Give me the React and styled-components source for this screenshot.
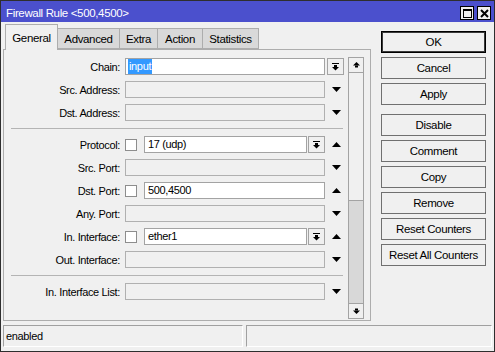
import React from "react";
import styled, { createGlobalStyle } from "styled-components";

const GlobalStyle = createGlobalStyle`
  html, body {
    margin: 0;
    padding: 0;
    background: #f0f0f0;
  }
  body {
    font-family: "Liberation Sans", Arial, sans-serif;
    font-size: 11px;
    letter-spacing: -0.35px;
    color: #000;
  }
  * {
    box-sizing: border-box;
  }
`;

function DropIcon() {
    return (
        <svg width="7" height="8" viewBox="0 0 7 8">
            <rect x="0" y="0" width="7" height="1" />
            <rect x="2" y="2" width="3" height="2" />
            <polygon points="0,4 7,4 3.5,7.5" />
        </svg>
    )
}

function ScrollIcon({ down }) {
    return (
        <svg width="7" height="6" viewBox="0 0 7 6" style={down ? { transform: "rotate(180deg)" } : undefined}>
            <polygon points="3.5,0 7,3.5 0,3.5" />
            <rect x="2" y="3.5" width="3" height="2" />
        </svg>
    )
}

function Triangle({ up }) {
    return (
        <svg width="9" height="5" viewBox="0 0 9 5">
            {up
                ? <polygon points="4.5,0 9,5 0,5" />
                : <polygon points="0,0 9,0 4.5,5" />}
        </svg>
    )
}

function Row({ label, check, value, enabled, drop, arrow }) {
    return (
        <FieldRow>
            <Label>{label}</Label>
            <Field>
                {check && <Check />}
                <TextBox $enabled={enabled}>{value}</TextBox>
                {drop && <DropButton><DropIcon /></DropButton>}
            </Field>
            <ArrowCell>
                <Triangle up={arrow === "up"} />
            </ArrowCell>
        </FieldRow>
    )
}

const tabs = [
    { name: "General", w: 53 },
    { name: "Advanced", w: 63 },
    { name: "Extra", w: 39 },
    { name: "Action", w: 46 },
    { name: "Statistics", w: 57 },
];

const buttons = [
    ["OK", "Cancel", "Apply"],
    ["Disable", "Comment", "Copy", "Remove", "Reset Counters", "Reset All Counters"],
];

function App() {
    return (
        <>
            <GlobalStyle />
            <Window>
                <TitleBar>
                    <Title>Firewall Rule &lt;500,4500&gt;</Title>
                    <TitleButtons>
                        <TitleButton>
                            <svg width="9" height="9" viewBox="0 0 9 9">
                                <rect x="0.5" y="0.5" width="8" height="8" fill="none" stroke="#000" />
                                <rect x="0" y="0" width="9" height="2" fill="#000" />
                            </svg>
                        </TitleButton>
                        <TitleButton>
                            <svg width="9" height="9" viewBox="0 0 9 9">
                                <path d="M1 1 L8 8 M8 1 L1 8" stroke="#000" strokeWidth="2" />
                            </svg>
                        </TitleButton>
                    </TitleButtons>
                </TitleBar>
                <Body>
                    <LeftColumn>
                        <TabRow>
                            {tabs.map((t, i) => (
                                <Tab key={t.name} $active={i === 0} $w={t.w}>{t.name}</Tab>
                            ))}
                        </TabRow>
                        <Panel>
                            <Form>
                                <FieldRow>
                                    <Label>Chain:</Label>
                                    <Field>
                                        <TextBox $enabled>
                                            <Selected>input</Selected>
                                        </TextBox>
                                    </Field>
                                    <ChainDrop><DropIcon /></ChainDrop>
                                </FieldRow>
                                <Row label="Src. Address:" />
                                <Row label="Dst. Address:" />
                                <Separator />
                                <Row label="Protocol:" check enabled drop value="17 (udp)" arrow="up" />
                                <Row label="Src. Port:" />
                                <Row label="Dst. Port:" check enabled value="500,4500" arrow="up" />
                                <Row label="Any. Port:" />
                                <Row label="In. Interface:" check enabled drop value="ether1" arrow="up" />
                                <Row label="Out. Interface:" />
                                <Separator />
                                <Row label="In. Interface List:" />
                            </Form>
                            <ScrollBar>
                                <ScrollButton><ScrollIcon /></ScrollButton>
                                <Thumb />
                                <Track />
                                <ScrollButton $bottom><ScrollIcon down /></ScrollButton>
                            </ScrollBar>
                        </Panel>
                    </LeftColumn>
                    <ButtonColumn>
                        {buttons.map((group, gi) => (
                            <ButtonGroup key={gi}>
                                {group.map((b) => (
                                    <Button key={b} $default={b === "OK"}>{b}</Button>
                                ))}
                            </ButtonGroup>
                        ))}
                    </ButtonColumn>
                </Body>
                <StatusBar>
                    <StatusCell $w={240}>enabled</StatusCell>
                    <StatusCell $w={246} />
                </StatusBar>
            </Window>
        </>
    )
}

const Window = styled.div`
    width: 495px;
    height: 352px;
    border: 1px solid #2e2e2e;
    background: #f0f0f0;
    display: flex;
    flex-direction: column;
`

const TitleBar = styled.div`
    height: 21px;
    flex-shrink: 0;
    background: #4b50cd;
    color: #fff;
    display: flex;
    align-items: center;
    justify-content: space-between;
    padding: 3px 3px 0 5px;
`

const Title = styled.div`
    font-size: 11.5px;
    white-space: nowrap;
`

const TitleButtons = styled.div`
    display: flex;
    gap: 3px;
`

const TitleButton = styled.div`
    width: 14px;
    height: 14px;
    border: 1px solid #000;
    background: #f0f0f0;
    display: flex;
    align-items: center;
    justify-content: center;
`

const Body = styled.div`
    display: flex;
    height: 299px;
    padding: 2px 8px 0 2px;
`

const LeftColumn = styled.div`
    width: 368px;
    display: flex;
    flex-direction: column;
`

const TabRow = styled.div`
    display: flex;
    align-items: flex-end;
    height: 25px;
    padding-left: 2px;
    position: relative;
    z-index: 1;
`

const Tab = styled.div`
    width: ${p => p.$w}px;
    height: ${p => p.$active ? 26 : 21}px;
    margin-bottom: ${p => p.$active ? -1 : 0}px;
    margin-left: -1px;
    border: 1px solid #adadad;
    border-bottom: ${p => p.$active ? "none" : "1px solid #adadad"};
    background: ${p => p.$active ? "#f0f0f0" : "#d9d9d9"};
    display: flex;
    align-items: center;
    justify-content: center;
    padding-top: ${p => p.$active ? 0 : 1}px;
    font-size: 11.5px;
    white-space: nowrap;
    &:first-child {
        margin-left: 0;
    }
`

const Panel = styled.div`
    height: 272px;
    border: 1px solid #adadad;
    display: flex;
`

const Form = styled.div`
    width: 344px;
    padding-top: 8px;
    display: flex;
    flex-direction: column;
    gap: 6px;
`

const FieldRow = styled.div`
    display: flex;
    align-items: center;
    height: 17px;
`

const Label = styled.div`
    width: 116px;
    margin-right: 5px;
    text-align: right;
    white-space: nowrap;
`

const Field = styled.div`
    width: 200px;
    height: 17px;
    display: flex;
    align-items: center;
`

const TextBox = styled.div`
    flex: 1;
    height: 17px;
    border: 1px solid ${p => p.$enabled ? "#a3a3a3" : "#b0b0b0"};
    background: ${p => p.$enabled ? "#fff" : "#f0f0f0"};
    padding: 0 3px;
    line-height: 15px;
    white-space: nowrap;
    overflow: hidden;
`

const Selected = styled.span`
    display: inline-block;
    background: #3399ff;
    color: #fff;
    margin-left: -1px;
    padding: 0 1px;
`

const Check = styled.div`
    width: 12px;
    height: 12px;
    border: 1px solid #8d8d8d;
    background: #fff;
    margin-right: 7px;
    flex-shrink: 0;
`

const DropButton = styled.div`
    width: 17px;
    height: 17px;
    margin-left: 1px;
    flex-shrink: 0;
    border: 1px solid #a3a3a3;
    background: #f0f0f0;
    display: flex;
    align-items: center;
    justify-content: center;
`

const ChainDrop = styled(DropButton)`
    margin-left: 2px;
`

const ArrowCell = styled.div`
    width: 16px;
    margin-left: 3px;
    display: flex;
    justify-content: center;
`

const Separator = styled.div`
    height: 1px;
    width: 332px;
    margin: 1px 0 1px 7px;
    background: #b4b4b4;
`

const ScrollBar = styled.div`
    width: 16px;
    margin: 7px 0 1px 0;
    border: 1px solid #a3a3a3;
    display: flex;
    flex-direction: column;
`

const ScrollButton = styled.div`
    height: 15px;
    flex-shrink: 0;
    background: #f0f0f0;
    border-${p => p.$bottom ? "top" : "bottom"}: 1px solid #a3a3a3;
    display: flex;
    align-items: center;
    justify-content: center;
`

const Thumb = styled.div`
    height: 128px;
    background: #f0f0f0;
    border-bottom: 1px solid #a3a3a3;
`

const Track = styled.div`
    flex: 1;
    background: #d8d8d8;
`

const ButtonColumn = styled.div`
    width: 105px;
    margin-left: 10px;
    padding-top: 7px;
    display: flex;
    flex-direction: column;
    gap: 9px;
`

const ButtonGroup = styled.div`
    display: flex;
    flex-direction: column;
    gap: 4px;
`

const Button = styled.div`
    height: 22px;
    border: 1px solid ${p => p.$default ? "#000" : "#707070"};
    box-shadow: ${p => p.$default ? "inset 0 0 0 1px #3a3a3a" : "none"};
    background: #f0f0f0;
    font-size: 11.5px;
    display: flex;
    align-items: center;
    justify-content: center;
    white-space: nowrap;
`

const StatusBar = styled.div`
    display: flex;
    gap: 3px;
    height: 22px;
    margin-top: 4px;
    padding-left: 2px;
`

const StatusCell = styled.div`
    width: ${p => p.$w}px;
    height: 22px;
    border: 1px solid;
    border-color: #a0a0a0 #fff #fff #a0a0a0;
    padding-left: 2px;
    display: flex;
    align-items: center;
`

export default App;
